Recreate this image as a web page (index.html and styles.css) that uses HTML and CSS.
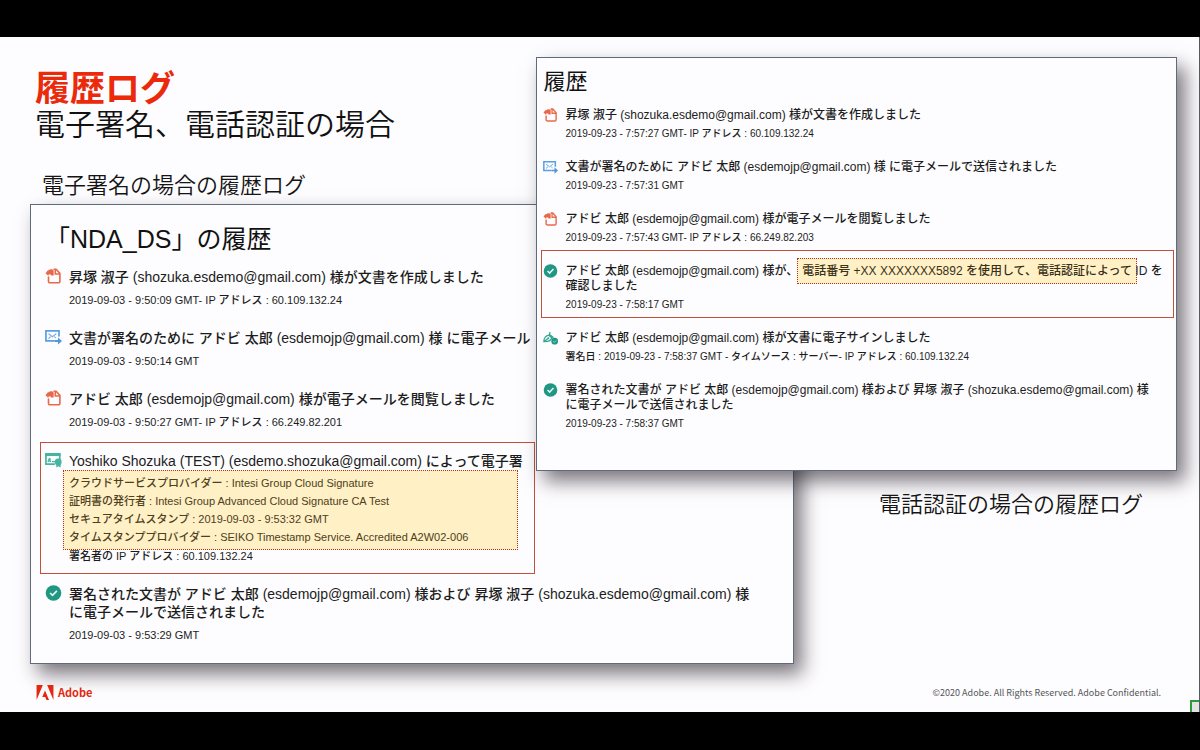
FILE: index.html
```html
<!DOCTYPE html>
<html lang="ja">
<head>
<meta charset="utf-8">
<title>履歴ログ</title>
<link rel="stylesheet" href="styles.css">
</head>
<body>
<svg class="sprite" aria-hidden="true">
  <symbol id="i-doc" viewBox="0 0 16 16">
    <path d="M3 8.6V13.4a1.4 1.4 0 0 0 1.4 1.4h8.6a1.4 1.4 0 0 0 1.4-1.4V5.4L10.6 1.2H8" fill="none" stroke="#e8694a" stroke-width="1.6"/>
    <path d="M9.8 1.2V6H14.4" fill="none" stroke="#e8694a" stroke-width="1.5"/>
    <path d="M0 5.2L3 1.6V2.8C4.8 0.6 7.8 1 8.2 3V7.4H5.4V6.4H3V8Z" fill="#e8694a"/>
  </symbol>
  <symbol id="i-mail" viewBox="0 0 18 16">
    <path d="M10.5 12.2H1V1.6H14.8V7.6" fill="none" stroke="#5a9fe0" stroke-width="1.8"/>
    <path d="M3.6 4.4L7.8 7.8L12 4.4M3.6 9.8L6 7.6M9.8 7.6L11.4 9" fill="none" stroke="#72ace4" stroke-width="1.2"/>
    <path d="M10.6 11.2H13.8V8.4L18 12.2L13.8 16V13.2H10.6Z" fill="#4f97dc"/>
  </symbol>
  <symbol id="i-check" viewBox="0 0 16 16">
    <circle cx="8" cy="8" r="7.8" fill="#1f9783"/>
    <path d="M4.6 8L7 10.4L11.4 5.8" fill="none" stroke="#e6f6f2" stroke-width="1.7"/>
  </symbol>
  <symbol id="i-cert" viewBox="0 0 18 16">
    <path d="M10.5 12.4H1V1.6H15.6V8" fill="none" stroke="#45b5a0" stroke-width="1.8"/>
    <path d="M0.2 0.8H16.4V3.8H0.2Z" fill="#45b5a0"/>
    <path d="M3.2 10.2C4 6.4 5.4 5.4 5.4 7.2S4.2 10.4 6.4 9.2M7.4 9.6H11" fill="none" stroke="#45b5a0" stroke-width="1.3"/>
    <circle cx="14" cy="10" r="3.6" fill="#45b5a0"/>
    <path d="M12 12H16.6V16L14.3 14.6L12 16Z" fill="#45b5a0"/>
  </symbol>
  <symbol id="i-sign" viewBox="0 0 18 16">
    <path d="M1 12.4C1.2 8.2 3.4 5.2 7 4.6L10.4 7.6C10 11 6.8 12.6 1 12.4ZM1 12.4L6 8.6M7.4 4.2L8.6 0.8M7.2 3.2L12 7L10.6 8" fill="none" stroke="#35a893" stroke-width="1.5"/>
    <circle cx="6.4" cy="8.4" r="1.2" fill="#35a893"/>
    <circle cx="14" cy="11.8" r="4" fill="#1f9783"/>
    <path d="M12.2 11.8L13.6 13.2L15.8 10.8" fill="none" stroke="#a5ddd2" stroke-width="1"/>
  </symbol>
</svg>

<main class="slide">
  <header class="heading">
    <h1>履歴ログ</h1>
    <p class="subtitle">電子署名、電話認証の場合</p>
    <h2 class="caption">電子署名の場合の履歴ログ</h2>
  </header>

  <section class="panel panel-sign">
    <h3>「NDA_DS」の履歴</h3>
    <ol class="log">
      <li><svg class="icon"><use href="#i-doc"/></svg><div>
        <p class="event">昇塚 淑子 (shozuka.esdemo@gmail.com) 様が文書を作成しました</p>
        <p class="meta">2019-09-03 - 9:50:09 GMT- IP アドレス : 60.109.132.24</p></div></li>
      <li><svg class="icon"><use href="#i-mail"/></svg><div>
        <p class="event">文書が署名のために アドビ 太郎 (esdemojp@gmail.com) 様 に電子メール</p>
        <p class="meta">2019-09-03 - 9:50:14 GMT</p></div></li>
      <li><svg class="icon"><use href="#i-doc"/></svg><div>
        <p class="event">アドビ 太郎 (esdemojp@gmail.com) 様が電子メールを閲覧しました</p>
        <p class="meta">2019-09-03 - 9:50:27 GMT- IP アドレス : 66.249.82.201</p></div></li>
      <li class="framed"><svg class="icon"><use href="#i-cert"/></svg><div>
        <p class="event">Yoshiko Shozuka (TEST) (esdemo.shozuka@gmail.com) によって電子署</p>
        <div class="details">
          <p>クラウドサービスプロバイダー : Intesi Group Cloud Signature</p>
          <p>証明書の発行者 : Intesi Group Advanced Cloud Signature CA Test</p>
          <p>セキュアタイムスタンプ : 2019-09-03 - 9:53:32 GMT</p>
          <p>タイムスタンププロバイダー : SEIKO Timestamp Service. Accredited A2W02-006</p>
        </div>
        <p class="signer">署名者の IP アドレス : 60.109.132.24</p></div></li>
      <li><svg class="icon"><use href="#i-check"/></svg><div>
        <p class="event">署名された文書が アドビ 太郎 (esdemojp@gmail.com) 様および 昇塚 淑子 (shozuka.esdemo@gmail.com) 様<br>に電子メールで送信されました</p>
        <p class="meta">2019-09-03 - 9:53:29 GMT</p></div></li>
    </ol>
  </section>

  <section class="panel panel-phone">
    <h3>履歴</h3>
    <ol class="log">
      <li><svg class="icon"><use href="#i-doc"/></svg><div>
        <p class="event">昇塚 淑子 (shozuka.esdemo@gmail.com) 様が文書を作成しました</p>
        <p class="meta">2019-09-23 - 7:57:27 GMT- IP アドレス : 60.109.132.24</p></div></li>
      <li><svg class="icon"><use href="#i-mail"/></svg><div>
        <p class="event">文書が署名のために アドビ 太郎 (esdemojp@gmail.com) 様 に電子メールで送信されました</p>
        <p class="meta">2019-09-23 - 7:57:31 GMT</p></div></li>
      <li><svg class="icon"><use href="#i-doc"/></svg><div>
        <p class="event">アドビ 太郎 (esdemojp@gmail.com) 様が電子メールを閲覧しました</p>
        <p class="meta">2019-09-23 - 7:57:43 GMT- IP アドレス : 66.249.82.203</p></div></li>
      <li class="framed"><svg class="icon"><use href="#i-check"/></svg><div>
        <p class="event">アドビ 太郎 (esdemojp@gmail.com) 様が、<mark>電話番号 +XX XXXXXXX5892 を使用して、電話認証によって</mark> ID を<br>確認しました</p>
        <p class="meta">2019-09-23 - 7:58:17 GMT</p></div></li>
      <li><svg class="icon"><use href="#i-sign"/></svg><div>
        <p class="event">アドビ 太郎 (esdemojp@gmail.com) 様が文書に電子サインしました</p>
        <p class="meta">署名日 : 2019-09-23 - 7:58:37 GMT - タイムソース : サーバー- IP アドレス : 60.109.132.24</p></div></li>
      <li><svg class="icon"><use href="#i-check"/></svg><div>
        <p class="event">署名された文書が アドビ 太郎 (esdemojp@gmail.com) 様および 昇塚 淑子 (shozuka.esdemo@gmail.com) 様<br>に電子メールで送信されました</p>
        <p class="meta">2019-09-23 - 7:58:37 GMT</p></div></li>
    </ol>
  </section>

  <h2 class="caption caption-phone">電話認証の場合の履歴ログ</h2>

  <footer class="foot">
    <span class="brand"><svg class="logo" viewBox="0 0 18 16"><path d="M0 0H6.7L0 16ZM18 0H11.3L18 16ZM9 5.8L13.3 16H10.5L9.2 12.8H6.1Z" fill="#e3280f"/></svg>Adobe</span>
    <small>©2020 Adobe. All Rights Reserved. Adobe Confidential.</small>
  </footer>
  <span class="corner"></span>
</main>
</body>
</html>
```
FILE: styles.css
```css
* { box-sizing: border-box; }

body {
  margin: 0;
  min-height: 100vh;
  padding: 37px 0 38px;
  display: flex;
  background: #000;
  color: #1c1c1c;
  font-family: "Liberation Sans", "Noto Sans CJK JP", sans-serif;
  font-weight: 500;
}

h1, h2, h3, p, ol { margin: 0; padding: 0; }

.sprite { position: absolute; width: 0; height: 0; }

.slide {
  position: relative;
  flex: 1;
  display: grid;
  grid-template-columns: 30fr 506fr 259fr 383fr 22fr;
  grid-template-rows: 20px 147px 267px auto 1fr;
  background: #fdfcfe;
  border-right: 1px solid #555a60;
  overflow: hidden;
}

.heading {
  grid-column: 2;
  grid-row: 2;
  padding: 11px 0 0 5px;
  font-family: "Noto Sans CJK JP", sans-serif;
}

h1 {
  color: #eb2a0c;
  font-size: 35px;
  font-weight: 700;
  line-height: 36px;
}

.subtitle {
  color: #111;
  font-size: 30px;
  font-weight: 350;
  line-height: 36px;
}

.caption {
  color: #151515;
  font-family: "Noto Sans CJK JP", sans-serif;
  font-size: 22px;
  font-weight: 350;
  line-height: 30px;
}

.heading .caption { padding: 28px 0 0 7px; }

.caption-phone {
  grid-column: 4;
  grid-row: 4;
  padding: 16px 34px 0 0;
  text-align: right;
}

.panel {
  background: #fdfcfe;
  border: 1px solid #5d6b80;
  box-shadow: 8px 10px 18px rgba(35, 28, 38, 0.6);
  white-space: nowrap;
}

.panel h3 { color: #111; font-weight: 400; }

.log { list-style: none; display: flex; flex-direction: column; }

.log li { display: flex; padding: 0 5px; }

.icon { flex: none; }

.framed { border: 1px solid #c2503a; }

.panel-sign {
  grid-column: 2 / 4;
  grid-row: 3 / 5;
  padding: 16px 9px 19px;
}

.panel-sign h3 { padding-left: 5px; font-size: 25px; line-height: 36px; }
.panel-sign .log { gap: 20px; padding-top: 11px; }
.panel-sign .icon { width: 17px; height: 16px; margin-right: 7px; }
.panel-sign .event { font-size: 14px; line-height: 18px; }
.panel-sign .meta { padding-top: 5px; font-size: 11px; line-height: 18px; }

.panel-sign .framed {
  max-width: 495px;
  margin: -9px 0;
  padding: 9px 4px 8px;
}

.details {
  width: 455px;
  margin-left: -6px;
  padding: 3px 5px;
  border: 1px dotted #b8321c;
  background: #fff0c6;
  color: #4d4020;
  font-size: 11px;
  line-height: 18px;
}

.signer { margin-top: -3px; font-size: 11px; line-height: 18px; }

.panel-phone {
  grid-column: 3 / 5;
  grid-row: 2 / 4;
  padding: 9px 4px 8px;
}

.panel-phone h3 { padding-left: 3px; font-size: 22px; line-height: 30px; }
.panel-phone .log { gap: 19px; padding-top: 11px; }
.panel-phone .icon { width: 15px; height: 14px; margin-right: 8px; }
.panel-phone .log li { padding-left: 2px; }
.panel-phone .event { font-size: 12px; line-height: 15px; }
.panel-phone .meta { padding-top: 4px; font-size: 10px; line-height: 14px; }

.panel-phone .log .framed {
  margin: -14px -2px -6px 0;
  padding: 13px 4px 5px 1px;
}

mark {
  margin: 0 -5px 0 -1px;
  padding: 5px 4px;
  border: 1px dotted #b8321c;
  background: #fff0c6;
  color: #3a3018;
}

.foot {
  grid-column: 2 / 5;
  grid-row: 5;
  display: flex;
  justify-content: space-between;
  align-items: center;
  padding: 8px 16px 0 6px;
  font-family: "Noto Sans CJK JP", sans-serif;
}

.brand {
  display: flex;
  align-items: center;
  gap: 4px;
  color: #e3280f;
  font-size: 11px;
  font-weight: 700;
}

.logo { width: 18px; height: 15px; }

.foot small { color: #55565a; font-size: 9px; font-weight: 400; }

.corner {
  position: absolute;
  right: -1px;
  bottom: 0;
  width: 10px;
  height: 12px;
  background: #e4e4e4;
  border: 2px solid #2f9a3a;
  border-width: 2px 0 0 2px;
}
```
